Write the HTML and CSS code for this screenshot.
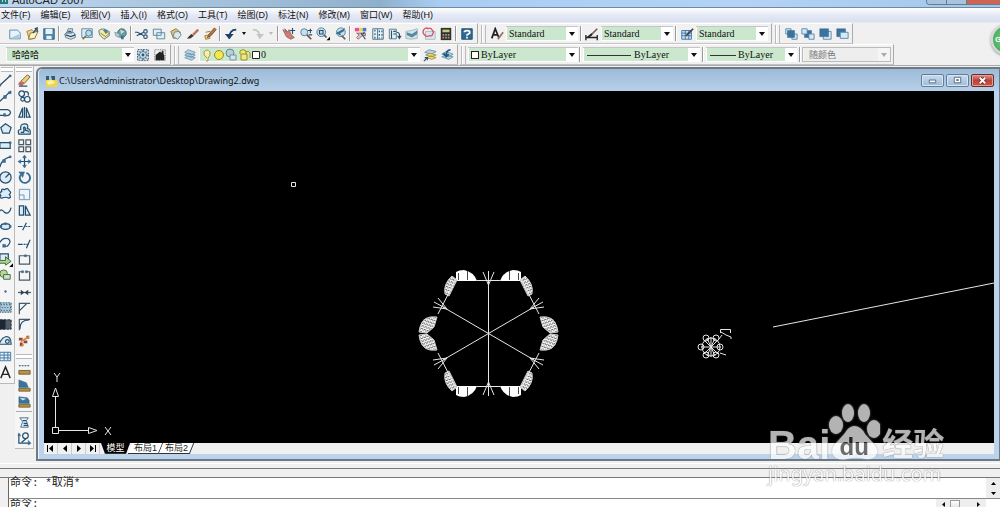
FILE: index.html
```html
<!DOCTYPE html>
<html lang="zh-CN">
<head>
<meta charset="utf-8">
<title>AutoCAD 2007</title>
<link rel="stylesheet" href="styles.css">
</head>
<body>
<div class="app">
<header class="titlebar"><svg class="logo" viewBox="0 0 9 9"><path class="teal" d="M1 0V7H7V1M4 0V7"/></svg><span>AutoCAD 2007</span><div class="caption"><i></i><i></i><i class="red"></i></div></header>
<nav class="menu">
<a href="#">文件(F)</a><a href="#">编辑(E)</a><a href="#">视图(V)</a><a href="#">插入(I)</a><a href="#">格式(O)</a><a href="#">工具(T)</a><a href="#">绘图(D)</a><a href="#">标注(N)</a><a href="#">修改(M)</a><a href="#">窗口(W)</a><a href="#">帮助(H)</a>
</nav>

<div class="bars">
<div class="row">
<div class="bar first">
<button aria-label="新建"><svg viewBox="0 0 16 16"><path fill="#e8f3fb" stroke="#4d86a8" d="M2 3.500H11L14 7V13.500H2Z"/><path fill="#a9cbe0" d="M4 12L13 8V13H4Z"/></svg></button>
<button aria-label="打开"><svg viewBox="0 0 16 16"><path fill="#efd488" stroke="#9c7d38" d="M2 5L8 3 10 5 14 4 11 13 5 14Z"/><path fill="#fff4c2" stroke="#806a35" d="M6 7L15 5 11 13 4 14Z"/><path class="k" d="M11 2L14 1 14 5M14 1L9 7"/></svg></button>
<button aria-label="保存"><svg viewBox="0 0 16 16"><path fill="#4c86aa" stroke="#2c5f82" d="M2 2H14V14H2Z"/><path fill="#e6f1f8" d="M4 2H12V8H4ZM5 10H11V14H5Z"/></svg></button>
<span class="sep"></span>
<button aria-label="打印"><svg viewBox="0 0 16 16"><path fill="#dce7ef" stroke="#587386" d="M4 7L6 2H11L10 7ZM2 8L5 6H12L14 9V12L9 14 3 12Z"/><path class="k" d="M3 9L9 11 14 9M6 5H9"/></svg></button>
<button aria-label="打印预览"><svg viewBox="0 0 16 16"><path fill="#dceaf3" stroke="#57879e" d="M2 2H14V12H2Z"/><circle cx="10" cy="7" r="3.500" fill="#b5daed" stroke="#426f8b"/><path stroke="#8d7041" stroke-width="2" d="M7 10L3 14"/></svg></button>
<button aria-label="发布"><svg viewBox="0 0 16 16"><path fill="#f4e8a6" stroke="#4e777f" d="M2 4L6 2 10 7 14 5 14 10 8 14 3 9Z"/><path fill="#4c8191" d="M7 1L13 4 10 8Z"/><path fill="none" stroke="#8d7b3c" d="M4 7L10 11 14 7"/></svg></button>
<button aria-label="三维 DWF"><svg viewBox="0 0 16 16"><circle cx="9" cy="7" r="5" fill="#669da9" stroke="#456f80"/><path fill="#d7ddb0" d="M7 3L12 5 8 8Z"/><path fill="#376f9d" d="M8 10H11V14H8Z"/><path fill="#c1d1db" stroke="#8197a4" d="M1 6L6 8V12L2 10Z"/></svg></button>
<span class="sep"></span>
<button aria-label="剪切"><svg viewBox="0 0 16 16"><circle cx="12" cy="5" r="2" class="k"/><circle cx="12" cy="11" r="2" class="k"/><path class="k" d="M10 6L2 10M10 10L3 6H0"/></svg></button>
<button aria-label="复制"><svg viewBox="0 0 16 16"><path fill="#e2edf4" stroke="#527f98" d="M1.500 2.500H10.500V9.500H1.500ZM5.500 6.500H14.500V13.500H5.500Z"/></svg></button>
<button aria-label="粘贴"><svg viewBox="0 0 16 16"><path fill="#dfc279" stroke="#8a7547" d="M2 5L8 2 13 6 11 12 5 13Z"/><path fill="#dbe9ee" stroke="#69858e" d="M6 6L11 5 14 9 10 14 5 11Z"/></svg></button>
<button aria-label="特性匹配"><svg viewBox="0 0 16 16"><path fill="#3d3532" d="M1 13L6 8 9 10 5 13Z"/><path fill="#b77a5e" d="M7 8L13 2 15 4 9 10Z"/></svg></button>
<button aria-label="块编辑器"><svg viewBox="0 0 16 16"><path fill="#f5d46d" stroke="#a57634" d="M2 10L7 9 8 13 3 14Z"/><path fill="#d96d2c" stroke="#604f43" d="M7 8L13 1 15 3 9 10 5 12Z"/><path fill="none" stroke="#8d6d3c" d="M3 6L8 5 10 9"/></svg></button>
<span class="sep"></span>
<button aria-label="放弃"><svg viewBox="0 0 16 16"><path fill="none" stroke="#1b4168" stroke-width="2" d="M14 3Q6 3 6 13"/><path fill="#1b4168" d="M1 8H11L6 14Z"/></svg></button>
<button class="drop" aria-label="放弃列表"></button>
<button aria-label="重做"><svg viewBox="0 0 16 16"><path fill="none" stroke="#c3c9c2" stroke-width="2" d="M2 3Q10 3 10 12"/><path fill="#c3c9c2" d="M6 8H15L10 14Z"/></svg></button>
<button class="drop pale" aria-label="重做列表"></button>
<span class="sep"></span>
<button aria-label="平移"><svg viewBox="0 0 16 16"><path fill="#c97f77" stroke="#9b625f" d="M1 3L5 6 3 2 7 6 8 3 10 8 14 12 10 14 5 11Z"/><path class="k" d="M12 1V8M9 4H15"/></svg></button>
<button aria-label="实时缩放"><svg viewBox="0 0 16 16"><circle cx="6" cy="6" r="4" class="lens"/><path class="handle" d="M9 9L14 14"/><path class="k" d="M10 4H15M13 2V7M11 9H15"/></svg></button>
<button aria-label="窗口缩放"><svg viewBox="0 0 16 16"><circle cx="6" cy="6" r="5" class="lens"/><path class="k" d="M4 4H8V8H4Z"/><path class="handle" d="M9 9L12 12"/><path d="M12 15H16V11Z"/></svg></button>
<button aria-label="缩放上一个"><svg viewBox="0 0 16 16"><circle cx="9" cy="6" r="5" class="lens"/><path class="handle" d="M10 10L14 14"/><path fill="#376b93" d="M3 7L14 1 12 5 8 7 10 10Z"/></svg></button>
<span class="sep"></span>
<button aria-label="特性"><svg viewBox="0 0 16 16"><path fill="#e65098" d="M1 1H6V5H1Z"/><path fill="#e9d34f" d="M6 1H10V5H6Z"/><path fill="#4a79c0" d="M10 1H14V5H10Z"/><path fill="#efc9be" stroke="#875b5e" d="M3 7H13V10L10 9 5 14 3 12 6 9Z"/><path class="k" d="M8 7L13 14M10 8L12 6"/></svg></button>
<button aria-label="设计中心"><svg viewBox="0 0 16 16"><path fill="#e8f1f6" stroke="#426a82" d="M2 2H14V14H2ZM7.500 2V14"/><path class="k" stroke-dasharray="2 2" d="M4.500 3V13M9.500 4V13M12.500 4V13"/></svg></button>
<button aria-label="工具选项板"><svg viewBox="0 0 16 16"><path fill="#e6f0f5" stroke="#4c7489" d="M1.500 2.500H9.500V13.500H1.500Z"/><path class="k" d="M4 4V13M6 5H9M6 8H9M10 6Q14 6 13 12M11 10L13 13 15 10"/></svg></button>
<button aria-label="图纸集"><svg viewBox="0 0 16 16"><path fill="#d1e2ea" stroke="#9db9c4" d="M1 5L7 4 14 2 14 13 7 14 1 13Z"/><path fill="#59889e" d="M2 6L8 8 14 4V8L8 12 2 9Z"/></svg></button>
<button aria-label="标记集"><svg viewBox="0 0 16 16"><path fill="#dae6ed" stroke="#a1b7c2" d="M4 5H15V14H4Z"/><path fill="none" stroke="#d65364" stroke-width="1.500" d="M2 3Q5 0 7 2 10 0 12 4 14 6 12 8 12 11 8 10 5 12 3 9 0 7 2 3Z"/></svg></button>
<button aria-label="计算器"><svg viewBox="0 0 16 16"><path fill="#30322b" d="M2 1H14V15H2Z"/><path fill="#c3c97e" d="M4 3H12V6H4Z"/><path stroke="#a69582" stroke-width="2" stroke-dasharray="2 1" d="M4 9H12M4 12H12"/></svg></button>
<span class="sep"></span>
<button aria-label="帮助"><svg viewBox="0 0 16 16"><path fill="#2d6990" stroke="#1c4a6e" d="M2 2H14V14H2Z"/><path fill="none" stroke="#fff" stroke-width="2" d="M5 6Q5 4 8 4 12 4 11 7L8 9V10M8 11V13"/></svg></button>
</div>
<div class="bar">
<span class="grip"></span>
<button aria-label="文字样式"><svg viewBox="0 0 16 16"><path fill="none" stroke="#222" stroke-width="2" d="M2 13L6 2 10 12M4 9H9"/><path stroke="#9f6d55" stroke-width="2" d="M15 6L9 14"/></svg></button>
<label class="combo w72"><select aria-label="文字样式"><option>Standard</option></select></label>
<span class="sep"></span>
<button aria-label="标注样式"><svg viewBox="0 0 16 16"><path fill="none" stroke="#222" stroke-width="1.500" d="M1 9V15M14 9V15M1 12H14"/><path stroke="#7a5f50" stroke-width="2" d="M14 2L6 10"/><path stroke="#222" stroke-width="2" d="M3 12L8 8"/></svg></button>
<label class="combo w72"><select aria-label="标注样式"><option>Standard</option></select></label>
<span class="sep"></span>
<button aria-label="表格样式"><svg viewBox="0 0 16 16"><path fill="#cfe1f3" stroke="#386fa0" d="M2 4H13V14H2ZM2 7H13M2 10H13M6 4V14M10 4V14"/><path stroke="#47413d" stroke-width="2" d="M15 2L7 10"/></svg></button>
<label class="combo w72"><select aria-label="表格样式"><option>Standard</option></select></label>
</div>
<div class="bar">
<span class="grip"></span>
<button aria-label="前置"><svg viewBox="0 0 16 16"><path class="sheet" d="M2 2H8V8H2ZM9 8H15V14H9Z"/><path class="blue" d="M4 4H12V12H4Z"/></svg></button>
<button aria-label="后置"><svg viewBox="0 0 16 16"><path class="blue" d="M4 4H12V12H4Z"/><path class="sheet" d="M1 2H7V8H1ZM9 8H15V14H9Z"/></svg></button>
<button aria-label="置于对象之上"><svg viewBox="0 0 16 16"><path class="sheet" d="M6 5H15V14H6Z"/><path class="blue" d="M2 2H12V11H2Z"/></svg></button>
<button aria-label="置于对象之下"><svg viewBox="0 0 16 16"><path class="blue" d="M2 2H12V11H2Z"/><path class="sheet" d="M6 6H15V13H6Z"/></svg></button>
</div>
</div>
<div class="row">
<div class="bar first">
<label class="combo w130"><select class="han" aria-label="工作空间"><option>哈哈哈</option></select></label>
<button aria-label="工作空间设置"><svg viewBox="0 0 16 16"><path class="k" stroke-dasharray="2 1" d="M2 2H14V14H2Z"/><circle cx="8" cy="8" r="4" class="lens"/><circle cx="8" cy="8" r="1" class="k"/><path class="k" d="M8 2V4M8 12V14M2 8H4M12 8H14M4 4L5 5M11 11L12 12M4 12L5 11M11 5L12 4"/></svg></button>
<button aria-label="我的工作空间"><svg viewBox="0 0 16 16"><path fill="none" stroke="#555" stroke-dasharray="1 1" d="M2 2H14V14H2Z"/><path fill="#222" d="M3 8L8 4 13 8V14H3ZM10 3H12V7H10Z"/></svg></button>
</div>
<div class="bar">
<span class="grip"></span>
<button aria-label="图层特性管理器"><svg viewBox="0 0 16 16"><path class="layer" d="M2 5L6 2 14 5 10 8ZM2 8L6 6 14 8 10 11ZM2 11L6 9 14 11 10 14Z"/></svg></button>
<label class="combo layers"><select aria-label="图层"><option>0</option></select>
<svg class="state" viewBox="0 0 60 14"><path fill="#f8f0a4" stroke="#a39955" d="M7 10Q3 7 4 4 7 0 10 4 11 7 8 10V13H6"/><circle cx="19" cy="7" r="4.500" fill="#f5e84d" stroke="#948a36"/><circle cx="30" cy="5" r="4" fill="#b5cfd8" stroke="#668a98"/><path fill="#d7e4e7" stroke="#7594a0" d="M30 7H36V12H30Z"/><path fill="#f5e77b" stroke="#8d9132" d="M40 6V3Q43 0 46 3V6M41 6H47V12H41ZM46 4Q49 2 50 5V10"/><path fill="#fff" stroke="#222" d="M52.500 3.500H59.500V10.500H52.500Z"/></svg></label>
<button aria-label="置为当前图层"><svg viewBox="0 0 16 16"><path class="layer" d="M2 5L7 2 15 4 10 7Z"/><path fill="#eedb73" stroke="#9b9141" d="M3 8L8 6 15 8 10 10ZM4 11L9 9 15 11 10 13Z"/><path class="k" d="M1 15L5 11M2 11H5V14"/></svg></button>
<button aria-label="上一个图层"><svg viewBox="0 0 16 16"><path class="layer" d="M2 7L7 4 15 7 10 10ZM2 10L7 8 15 10 10 13Z"/><path fill="none" stroke="#285680" stroke-width="2" d="M12 2Q7 2 7 9M4 6L7 10 10 7"/></svg></button>
</div>
<div class="bar">
<span class="grip"></span>
<label class="combo color"><select aria-label="颜色"><option>ByLayer</option></select><i class="swatch"></i></label>
<span class="sep"></span>
<label class="combo linetype"><select aria-label="线型"><option>ByLayer</option></select><i class="rule"></i></label>
<span class="sep"></span>
<label class="combo weight"><select aria-label="线宽"><option>ByLayer</option></select><i class="rule"></i></label>
<span class="sep"></span>
<label class="combo off"><select class="han" aria-label="打印样式" disabled><option>随颜色</option></select></label>
</div>
</div>
</div>

<main class="work">
<aside class="rail draw">
<span class="hgrip"></span>
<div class="stack long">
<button aria-label="直线"><svg viewBox="0 0 16 16"><path class="k" d="M2 13L13 3"/><path class="blue" d="M1 12H3V14H1ZM12 2H14V4H12Z"/></svg></button>
<button aria-label="构造线"><svg viewBox="0 0 16 16"><path class="k" d="M1 14L14 2"/><path class="blue" d="M6 7H9V10H6ZM11 3H14V5H11Z"/></svg></button>
<button aria-label="多段线"><svg viewBox="0 0 16 16"><path class="k" d="M2 5H10Q14 6 13 9 12 12 7 11H2"/><path class="blue" d="M6 9H8V12H6Z"/></svg></button>
<button aria-label="正多边形"><svg viewBox="0 0 16 16"><path class="k pale-fill" d="M3 7L8 3 14 7 12 13H5Z"/></svg></button>
<button aria-label="矩形"><svg viewBox="0 0 16 16"><path class="k pale-fill" d="M2 5H13V11H2Z"/><path class="blue" d="M12 4H14V6H12Z"/></svg></button>
<button aria-label="圆弧"><svg viewBox="0 0 16 16"><path class="k" d="M2 14Q4 5 13 3"/><path class="blue" d="M5 6H8V9H5ZM12 2H14V4H12Z"/></svg></button>
<button aria-label="圆"><svg viewBox="0 0 16 16"><circle class="k pale-fill" cx="8" cy="8" r="6"/><path class="k" d="M8 8L12 4"/></svg></button>
<button aria-label="修订云线"><svg viewBox="0 0 16 16"><path class="k pale-fill" d="M4 13Q1 13 3 10 0 7 4 6 3 2 7 4 10 1 12 5 15 7 12 9 15 13 11 13 9 11 4 13Z"/></svg></button>
<button aria-label="样条曲线"><svg viewBox="0 0 16 16"><path class="k" d="M1 12Q2 4 7 10 12 13 14 5"/></svg></button>
<button aria-label="椭圆"><svg viewBox="0 0 16 16"><ellipse class="k pale-fill" cx="8" cy="8" rx="5" ry="3"/><path class="blue" d="M2 7H4V9H2ZM7 4H9V6H7ZM12 7H14V9H12Z"/></svg></button>
<button aria-label="椭圆弧"><svg viewBox="0 0 16 16"><path class="k" d="M2 8Q5 2 11 4 15 7 10 12H6"/><path class="blue" d="M5 10H8V13H5Z"/></svg></button>
<button aria-label="插入块"><svg viewBox="0 0 16 16"><path class="k pale-fill" d="M2 2H11V11H2Z"/><path fill="#a9d18e" stroke="#416b39" d="M1 9H8V5L14 10 8 14V12H1Z"/><path d="M16 12V16H12Z"/></svg></button>
<button aria-label="创建块"><svg viewBox="0 0 16 16"><circle fill="#bada91" stroke="#4e7245" cx="6" cy="6" r="4"/><path fill="#cfe2d4" stroke="#416b39" d="M6 7H13V12H6Z"/></svg></button>
<button aria-label="点"><svg viewBox="0 0 16 16"><circle class="blue" cx="8" cy="8" r="1"/></svg></button>
<button aria-label="图案填充"><svg viewBox="0 0 16 16"><path fill="#acc8d5" stroke="#235574" stroke-dasharray="2 1" d="M2 3H14V13H2Z"/><path class="k" stroke-dasharray="1 2" d="M3 5H13M4 8H14M3 11H13"/></svg></button>
<button aria-label="渐变色"><svg viewBox="0 0 16 16"><path fill="#535b66" stroke="#182c3a" stroke-dasharray="3 1" d="M2 3H14V13H2Z"/><path fill="#1b2733" d="M2 3H8V13H2Z"/></svg></button>
<button aria-label="面域"><svg viewBox="0 0 16 16"><path class="k pale-fill" d="M1 12H14Q14 3 8 4 4 5 1 12Z"/><circle class="k" cx="10" cy="9" r="2"/></svg></button>
<button aria-label="表格"><svg viewBox="0 0 16 16"><path fill="#dfeffb" stroke="#45789e" d="M2 3.500H13.500V12.500H2ZM2 6.500H13M2 9.500H13M6.500 3V12M10.500 3V12"/></svg></button>
<button aria-label="多行文字"><svg viewBox="0 0 16 16"><path fill="none" stroke="#222" stroke-width="1.500" d="M3 14L8 2 13 14M5 10H11"/></svg></button>
</div>
</aside>
<aside class="rail modify">
<span class="hgrip"></span>
<div class="stack tall">
<button aria-label="删除"><svg viewBox="0 0 16 16"><path fill="#f6cf72" stroke="#6b624d" d="M4 9L11 2 14 4 8 11Z"/><path fill="#ca675c" d="M3 9L8 11 5 14 1 12Z"/><path class="k" d="M2 14H11"/></svg></button>
<button aria-label="复制"><svg viewBox="0 0 16 16"><circle class="k" cx="5" cy="5" r="3"/><circle class="k" cx="6" cy="11" r="2"/><circle class="k" cx="11" cy="11" r="3"/><path class="k" d="M8 3Q13 2 12 7"/></svg></button>
<button aria-label="镜像"><svg viewBox="0 0 16 16"><path class="k pale-fill" d="M6 3V13H2ZM10 3V13H14Z"/><path class="k" d="M8 2V14"/></svg></button>
<button aria-label="偏移"><svg viewBox="0 0 16 16"><path class="k pale-fill" d="M2 13Q0 8 4 8 3 2 8 2 13 2 11 7 15 7 14 13Z"/><path class="k" d="M4 11H7Q8 10 7 6 9 4 9 9 13 9 12 11"/></svg></button>
<button aria-label="阵列"><svg viewBox="0 0 16 16"><path class="g" d="M2 2H7V7H2ZM9.500 2H14.500V7H9.500ZM2 9.500H7V14.500H2ZM9.500 9.500H14.500V14.500H9.500Z"/></svg></button>
<button aria-label="移动"><svg viewBox="0 0 16 16"><path class="k" d="M8 3V13M3 8H13"/><path class="blue" d="M8 1L10 4H6ZM8 15L6 12H10ZM1 8L4 6V10ZM15 8L12 6V10Z"/></svg></button>
<button aria-label="旋转"><svg viewBox="0 0 16 16"><path fill="none" stroke="#376c95" stroke-width="2" d="M10 3A5.500 5.500 0 1 1 4 5"/><path class="blue" d="M2 2H8L6 8Z"/></svg></button>
<button aria-label="缩放"><svg viewBox="0 0 16 16"><path fill="#edf5fb" stroke="#7093b3" d="M2.500 2.500H13.500V13.500H2.500ZM2.500 8.500H7.500V13.500"/></svg></button>
<button aria-label="拉伸"><svg viewBox="0 0 16 16"><path class="k pale-fill" d="M2.500 3V13H7V3ZM9 3L14 13H9Z"/></svg></button>
<button aria-label="修剪"><svg viewBox="0 0 16 16"><path class="k" d="M1 8H6M10 4L6 12"/><path class="k" stroke-dasharray="2 1" d="M9 8H15"/></svg></button>
<button aria-label="延伸"><svg viewBox="0 0 16 16"><path class="k" d="M1 9H6M14 4L10 13"/><path class="k" stroke-dasharray="2 1" d="M7 9H12"/></svg></button>
<button aria-label="打断于点"><svg viewBox="0 0 16 16"><path class="g" d="M2.500 4H13.500V13H2.500Z"/><path class="blue" d="M8 3H10V5H8Z"/></svg></button>
<button aria-label="打断"><svg viewBox="0 0 16 16"><path class="g" d="M6 4H2.500V13H13.500V4H10"/><path class="blue" d="M5 3H7V5H5ZM9 3H11V5H9Z"/></svg></button>
<button aria-label="合并"><svg viewBox="0 0 16 16"><path class="g" d="M1 8H15"/><path fill="#33424e" d="M4 5L8 8 4 11ZM12 5L8 8 12 11Z"/></svg></button>
<button aria-label="倒角"><svg viewBox="0 0 16 16"><path class="g" d="M2.500 14V2.500H14"/><path class="k" d="M3 10L10 3"/></svg></button>
<button aria-label="圆角"><svg viewBox="0 0 16 16"><path class="g" d="M2.500 14V2.500H14"/><path class="k" d="M3 13Q3 3 13 3"/></svg></button>
<button aria-label="分解"><svg viewBox="0 0 16 16"><path fill="#8c4a3d" d="M2 5H6V8H2ZM7 8H11V11H7ZM3 10H6V14H3ZM10 3H13V6H10Z"/><path stroke="#dc8a3a" stroke-width="2" d="M4 9L13 4M7 12L5 14"/></svg></button>
</div>
<span class="hgrip split"></span>
<div class="stack">
<button aria-label="距离"><svg viewBox="0 0 16 16"><path class="k" stroke-dasharray="2 1" d="M2 4H14"/><path class="ruler" d="M2 9H14V13H2Z"/></svg></button>
<button aria-label="面积"><svg viewBox="0 0 16 16"><path class="blue" d="M2 2L10 5 12 10H2Z"/><path class="ruler" d="M2 11H14V14H2Z"/></svg></button>
<button aria-label="质量特性"><svg viewBox="0 0 16 16"><path class="blue" d="M2 3L11 4 13 7V10H2Z"/><path fill="#cfe3f0" d="M3 4L10 5 6 7Z"/><path class="ruler" d="M2 11H14V14H2Z"/></svg></button>
<span class="hsep"></span>
<button aria-label="列表"><svg viewBox="0 0 16 16"><path fill="#eaf4f9" stroke="#446f88" d="M3 3H12L10 6 12 13H4L6 7Z"/><path class="k" d="M6 6H10M7 9H11M7 11H12"/></svg></button>
<button aria-label="定位点"><svg viewBox="0 0 16 16"><path class="k" d="M2 3V13H13M5 12L10 8"/><circle class="k" cx="9" cy="5" r="3"/><path class="blue" d="M12 10L15 13 12 15ZM1 5L2 2 4 5Z"/></svg></button>
</div>
</aside>

<section class="mdi">
<header class="doc-title">
<svg class="doc-icon" viewBox="0 0 12 12"><path fill="#f1d447" d="M1 5H12V12H1Z"/><path fill="#345a6b" d="M1 1H4V5H1ZM6 1H10V5H7Z"/><path fill="#fff3a0" d="M2 6L7 5 10 8 3 10Z"/></svg>
<h1>C:\Users\Administrator\Desktop\Drawing2.dwg</h1>
<div class="doc-buttons">
<button aria-label="最小化"><svg viewBox="0 0 22 12"><path fill="#fff" stroke="#506680" d="M7.500 5.500H14.500V8.500H7.500Z"/></svg></button>
<button aria-label="还原"><svg viewBox="0 0 22 12"><path fill="#fff" stroke="#506680" d="M7.500 2.500H14.500V8.500H7.500ZM10 5H12V6H10Z"/></svg></button>
<button class="close" aria-label="关闭"><svg viewBox="0 0 22 12"><path stroke="#712f32" stroke-width="4" d="M8 3L14 9M14 3L8 9"/><path stroke="#fff" stroke-width="2" d="M8 3L14 9M14 3L8 9"/></svg></button>
</div>
</header>
<div class="canvas">
<svg class="drawing" viewBox="44 91 950 352" preserveAspectRatio="xMinYMin meet">
<defs>
<pattern id="hatch" width="3" height="3" patternUnits="userSpaceOnUse" patternTransform="rotate(20)"><path fill="#f4f4f4" d="M0 0H3V3H0Z"/><path fill="#666" d="M0 0H1V1H0ZM1 2H3V3H1Z"/></pattern>
<g id="quarter">
<path fill="#fff" d="M456 281V272Q459 270 464 270 474 272 477 281Z"/>
<path stroke="#444" d="M458.500 273V280M467.500 271V280"/>
<path fill="url(#hatch)" stroke="#ccc" d="M452 276L457 280 449 296 445 294Q443 284 452 276Z"/>
<path fill="url(#hatch)" stroke="#ccc" d="M437 317Q423 315 420 327L419 332 427 333 434 327Z"/>
<path class="line" d="M477 280.500H488.500M456 279L438 314M488.500 285L483 272M488.500 333.500L443 307M447 309L438 298M447 309L434 302M447 309L433 307M488.500 271V333"/>
</g>
</defs>
<use href="#quarter"/>
<use href="#quarter" transform="translate(977 0) scale(-1 1)"/>
<use href="#quarter" transform="translate(0 667) scale(1 -1)"/>
<use href="#quarter" transform="translate(977 667) scale(-1 -1)"/>
<path class="line" d="M773 327L994 283"/>
<g class="line">
<circle cx="711" cy="347" r="9"/><circle cx="701" cy="347" r="3"/><circle cx="706" cy="338" r="3"/><circle cx="716" cy="338" r="3"/><circle cx="720" cy="347" r="3"/><circle cx="706" cy="355" r="3"/><circle cx="716" cy="355" r="3"/>
<path d="M701 347H721M711 337V357M704 340L718 354M718 340L704 354M707 338L715 356M715 338L707 356M720 353L726 355M720.500 333V329.500H730.500V333M721 332L726 335 731 337V339M719 339L722 335"/>
<path d="M52.500 427.500H58.500V433.500H52.500ZM58.500 430.500H89M55.500 427V397M88.500 427.500L97 430.500 88.500 433.500ZM52.500 396.500L55.500 388 58.500 396.500ZM54 373L57 377 60 373M57 377V382M105 427L111 435M111 427L105 435"/>
<path d="M291.500 182.500H295.500V186.500H291.500Z"/>
</g>
</svg>
</div>
<div class="tabs">
<div class="pager">
<button aria-label="第一个"><svg viewBox="0 0 13 11"><path d="M3 2H4V9H3ZM9 2V9L5 5.500Z"/></svg></button>
<button aria-label="上一个"><svg viewBox="0 0 13 11"><path d="M9 2V9L5 5.500Z"/></svg></button>
<button aria-label="下一个"><svg viewBox="0 0 13 11"><path d="M5 2V9L9 5.500Z"/></svg></button>
<button aria-label="最后一个"><svg viewBox="0 0 13 11"><path d="M4 2V9L8 5.500ZM9 2H10V9H9Z"/></svg></button>
</div>
<button class="tab on">模型</button><button class="tab">布局1</button><button class="tab">布局2</button>
</div>
</section>
</main>

<section class="command">
<div class="history"><p>命令: *取消*</p><div class="vscroll"><button aria-label="向上滚动"><svg viewBox="0 0 7 4"><path d="M0 4H7L3.500 0Z"/></svg></button><button aria-label="向下滚动"><svg viewBox="0 0 7 4"><path d="M0 0H7L3.500 4Z"/></svg></button></div></div>
<div class="prompt"><label for="cmd">命令:</label><input id="cmd" type="text"><div class="hscroll"><button aria-label="向左滚动"><svg viewBox="0 0 4 7"><path d="M4 0V7L0 3.500Z"/></svg></button><i class="thumb"></i><button aria-label="向右滚动"><svg viewBox="0 0 4 7"><path d="M0 0V7L4 3.500Z"/></svg></button></div></div>
</section>

<div class="ball">Ge</div>
<div class="mark">
<div class="brand"><span>Bai</span>
<div class="paw"><svg viewBox="0 0 52 58"><ellipse cx="8" cy="22" rx="7" ry="9"/><ellipse cx="20" cy="10" rx="6" ry="9"/><ellipse cx="36" cy="10" rx="6" ry="9"/><ellipse cx="46" cy="26" rx="7" ry="9"/><path d="M26 23Q33 23 37 31L46 41Q52 48 47 54 42 58 33 55 26 54 19 56 9 58 5 52 2 46 9 39L17 30Q20 24 26 23Z"/></svg><b>du</b></div>
<span class="cn">经验</span></div>
<div class="site">jingyan.baidu.com</div>
</div>
</div>
</body>
</html>
```
FILE: styles.css
```css
* { box-sizing: border-box; }
body { margin: 0; background: #f0f0f0; color: #222; font-family: "Liberation Sans", "Noto Sans CJK SC", sans-serif; font-size: 9px; }
button { padding: 0; border: 0; background: none; font: inherit; color: inherit; display: flex; align-items: center; justify-content: center; flex: none; }
svg { display: block; }
.app { position: relative; height: 100vh; overflow: hidden; display: flex; flex-direction: column; }

/* Shared icon paints */
.k { fill: none; stroke: #23506f; stroke-width: 1.3; }
.g { fill: none; stroke: #4a5a66; stroke-width: 1.3; }
.k.pale-fill { fill: #dcebf5; }
.blue { fill: #3b739f; stroke: #315d82; stroke-width: 0.500; }
.sheet { fill: #d6e9f7; stroke: #5585a8; }
.layer { fill: #b8d6e9; stroke: #6790aa; }
.lens { fill: #c7e0ee; stroke: #4b7895; }
.handle { stroke: #67594a; stroke-width: 2; }
.ruler { fill: #b5924a; stroke: #776234; }
.teal { fill: none; stroke: #267c7b; stroke-width: 2; }

.titlebar { flex: none; height: 7px; overflow: hidden; display: flex; align-items: flex-end; background: linear-gradient(90deg, #bfd8ef, #8fb0cc 38%, #a9cdf3 44%, #b4d3f4 75%, #a3c6e8); font-size: 11px; line-height: 12px; }
.logo { width: 9px; height: 9px; margin: 0 3px 2px 0; }
.titlebar span { margin-bottom: 1px; }
.caption { margin-left: auto; display: flex; height: 5px; align-self: flex-start; border: solid #657b94; border-width: 0 0 1px 1px; border-radius: 0 0 0 4px; overflow: hidden; }
.caption i { width: 20px; border-right: 1px solid #657b94; background: #a8c3dd; }
.caption .red { width: 33px; background: #cc6556; border: 0; }

.menu { flex: none; height: 16px; display: flex; gap: 10px; padding-left: 1px; align-items: center; background: linear-gradient(#fff, #e4e9f5 50%, #d9dfef); border-top: 1px solid #6f8aa5; border-bottom: 1px solid #e8ebf3; }
.menu a { color: #111; text-decoration: none; line-height: 14px; }

.bars { flex: none; }
.row { display: flex; height: 21px; gap: 2px; }
.bar { display: flex; align-items: center; border-right: 1px solid #aaa; border-bottom: 1px solid #c3c3c3; border-top: 1px solid #fff; background: #f1f1f1; padding-right: 2px; }
.bar.first { padding-left: 6px; }
.bar button { width: 17px; height: 17px; }
.bar button svg { width: 14px; height: 14px; }
.bar .drop { width: 10px; }
.drop::after, .combo::after { content: ""; border: solid transparent; border-width: 4px 3px 0; border-top-color: #111; }
.drop::after { border-width: 3px 2px 0; }
.drop.pale::after { border-top-color: #bbb; }
.sep { flex: none; width: 4px; height: 15px; background: linear-gradient(90deg, transparent 1px, #999 1px, #999 2px, #fff 2px, #fff 3px, transparent 3px); }
.grip { flex: none; width: 5px; height: 18px; margin: 0 2px 0 1px; border: solid #bbb; border-width: 0 1px; background: linear-gradient(90deg, #fff 1px, transparent 1px); }

.combo { position: relative; display: flex; flex: none; height: 15px; background: #fff; border-top: 1px solid #c5c5c5; }
.combo select { flex: 1; min-width: 0; height: 13px; margin: 0 12px 0 1px; padding: 0 0 0 2px; border: 0; appearance: none; background: #cbe8cf; color: #111; font: 10px/13px "Liberation Serif", "Noto Sans CJK SC", serif; }
.combo select.han { padding-left: 5px; font: 9px/13px "Noto Sans CJK SC", sans-serif; }
.combo::after { position: absolute; right: 3px; top: 5px; pointer-events: none; }
.w72 { width: 72px; margin: 0 1px; }
.w130 { width: 128px; }
.layers { width: 221px; margin: 0 1px; }
.layers select { padding-left: 61px; }
.state { position: absolute; left: 1px; top: 0; width: 60px; height: 14px; pointer-events: none; }
.color { width: 110px; }
.color select { padding-left: 12px; }
.swatch { position: absolute; left: 3px; top: 3px; width: 8px; height: 8px; background: #fff; border: 1px solid #222; }
.linetype { width: 117px; margin: 0 1px; }
.linetype select { padding-left: 50px; }
.weight { width: 91px; margin: 0 1px; }
.weight select { padding-left: 31px; }
.rule { position: absolute; left: 4px; top: 7px; width: 44px; height: 1px; background: #333; }
.weight .rule { width: 26px; }
.off { width: 89px; border: 1px solid #bbb; background: #f5f5f5; }
.off select.han { background: #eee; color: #777; opacity: 1; }
.off::after { border-top-color: #aaa; }

.work { flex: 1; min-height: 0; display: flex; border-top: 1px solid #aaa; }
.rail { flex: none; display: flex; flex-direction: column; align-self: flex-start; background: #f5f5f5; border-right: 1px solid #bbb; border-bottom: 1px solid #bbb; padding-bottom: 2px; }
.draw { width: 15px; overflow: hidden; }
.draw button { align-self: flex-end; margin-right: 1px; }
.modify { width: 19px; align-items: center; }
.hgrip { align-self: stretch; flex: none; height: 5px; margin: 1px 1px 0; border: solid #bbb; border-width: 1px 0; background: #fff; }
.split { margin-top: 5px; margin-bottom: 2px; }
.stack { display: flex; flex-direction: column; }
.stack button { flex: 1; width: 16px; min-height: 16px; }
.stack svg { width: 15px; height: 15px; }
.tall { min-height: 277px; }
.long { min-height: 309px; }
.hsep { height: 1px; margin: 2px 0; background: #aaa; }

.mdi { flex: 1; min-width: 0; margin: 1px 0 2px 2px; display: flex; flex-direction: column; padding: 0 5px 5px 6px; border: solid #6f7984; border-width: 2px 1px 2px 2px; border-radius: 6px 0 0 0; background: #bcd4eb; box-shadow: inset 1px 1px #e8f3fc; }
.doc-title { flex: none; height: 22px; margin: 0 -5px; padding: 1px 5px 0; display: flex; align-items: center; background: linear-gradient(#9dbbd8, #b7d0e9); border-radius: 4px 0 0 0; }
.doc-icon { width: 12px; height: 12px; margin: 0 2px 0 1px; }
.doc-title h1 { margin: 0; font: 9px/14px "Noto Sans", sans-serif; color: #101820; }
.doc-buttons { display: flex; gap: 2px; margin-left: auto; }
.doc-buttons button { width: 23px; height: 13px; border: 1px solid #637d98; border-radius: 2px; background: linear-gradient(#c8dbed, #9fbbd7); box-shadow: inset 0 0 0 1px #d7e7f5; }
.doc-buttons .close { border-color: #6c2b31; background: linear-gradient(#dd9588, #bd4238 50%, #c95848); box-shadow: inset 0 0 0 1px #dfa197; }
.doc-buttons svg { width: 21px; height: 11px; }
.canvas { flex: 1; min-height: 0; background: #000; overflow: hidden; }
.drawing { width: 100%; height: 100%; }
.line { fill: none; stroke: #e6e6e6; stroke-width: 1; }
.tabs { flex: none; height: 11px; display: flex; background: #f0f0f0; }
.pager { display: flex; margin-right: 1px; }
.pager button { width: 14px; border-right: 1px solid #ccc; }
.pager svg { width: 13px; height: 11px; }
.tab { position: relative; z-index: 0; width: 31px; height: 11px; line-height: 11px; }
.tab::before { content: ""; position: absolute; z-index: -1; inset: 0; border: solid #333; border-width: 0 1px 1px 0; background: #fff; transform: skewX(-22deg); }
.tab.on { width: 29px; color: #fff; }
.tab.on::before { background: #000; transform: none; clip-path: polygon(0 0, 100% 0, 86% 100%, 14% 100%); }

.command { flex: none; height: 44px; padding-top: 4px; background: #f0f0f0; border-top: 1px solid #fff; display: flex; flex-direction: column; font: 11px/13px "Liberation Mono", "Noto Sans CJK SC", monospace; }
.command::before { content: ""; flex: none; height: 8px; border: solid #777; border-width: 1px 0; }
.history { flex: none; height: 21px; margin-left: 8px; display: flex; background: #fff; border-left: 1px solid #666; border-bottom: 1px solid #888; }
.history p { margin: 0 0 0 1px; flex: 1; line-height: 11px; }
.vscroll { width: 14px; background: #eee; display: flex; flex-direction: column; justify-content: space-around; align-items: center; }
.vscroll svg { width: 5px; height: 3px; }
.prompt { flex: 1; min-height: 0; margin-left: 8px; padding-left: 1px; overflow: hidden; display: flex; background: #fff; border-left: 1px solid #666; line-height: 11px; }
.prompt input { flex: 1; min-width: 0; height: 10px; padding: 0; border: 0; outline: 0; background: none; font: inherit; }
.hscroll { width: 50px; margin-right: 14px; display: flex; align-items: center; justify-content: space-between; padding: 0 6px; background: #eee; height: 11px; }
.hscroll svg { width: 3px; height: 5px; }
.thumb { width: 10px; height: 10px; margin-right: 12px; border: 1px solid #999; background: linear-gradient(#fff, #ddd); }

.ball { position: absolute; right: -22px; top: 24px; width: 31px; height: 31px; padding-left: 2px; border: 2px solid #d5d9d5; border-radius: 50%; background: radial-gradient(#83d391, #35a04c); color: #fff; font-size: 8px; font-weight: bold; line-height: 27px; box-shadow: 0 1px 3px #888; }

.mark { position: absolute; right: 54px; bottom: 22px; width: 178px; color: #fff; opacity: 0.700; text-shadow: 0 0 1px #555, 0 0 1px #777; pointer-events: none; }
.brand { display: flex; align-items: flex-end; font-weight: bold; font-size: 40px; line-height: 36px; }
.paw { position: relative; width: 52px; height: 58px; flex: none; margin: 0 0 2px -2px; }
.paw svg { width: 52px; height: 58px; fill: #fff; filter: drop-shadow(0 0 1px #999); }
.paw b { position: absolute; left: 0; right: 0; bottom: 2px; text-align: center; color: #333; font-size: 24px; line-height: 24px; text-shadow: none; }
.brand .cn { font-size: 31px; margin-left: 2px; }
.site { font-family: "Noto Sans", sans-serif; font-size: 20px; line-height: 22px; }
```
